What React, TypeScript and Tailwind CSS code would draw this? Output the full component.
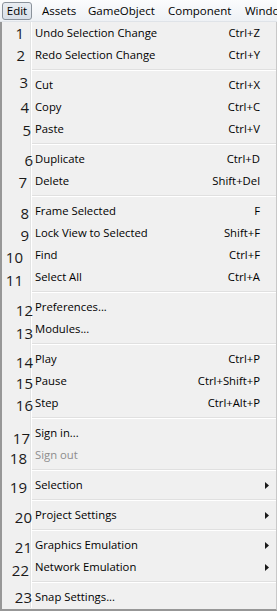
import React from "react";

type Item =
  | { kind: "sep" }
  | {
      kind: "item";
      n: string;
      label: string;
      shortcut?: string;
      sub?: boolean;
      disabled?: boolean;
      numCls: string;
    };

const items: Item[] = [
  { kind: "item", n: "1", label: "Undo Selection Change", shortcut: "Ctrl+Z", numCls: "w-[22px] top-[4px]" },
  { kind: "item", n: "2", label: "Redo Selection Change", shortcut: "Ctrl+Y", numCls: "w-[23px] top-[4px]" },
  { kind: "sep" },
  { kind: "item", n: "3", label: "Cut", shortcut: "Ctrl+X", numCls: "w-[26px] top-[1px]" },
  { kind: "item", n: "4", label: "Copy", shortcut: "Ctrl+C", numCls: "w-[27px] top-[4px]" },
  { kind: "item", n: "5", label: "Paste", shortcut: "Ctrl+V", numCls: "w-[29px] top-[5px]" },
  { kind: "sep" },
  { kind: "item", n: "6", label: "Duplicate", shortcut: "Ctrl+D", numCls: "w-[31px] top-[5px]" },
  { kind: "item", n: "7", label: "Delete", shortcut: "Shift+Del", numCls: "w-[25px] top-[5px]" },
  { kind: "sep" },
  { kind: "item", n: "8", label: "Frame Selected", shortcut: "F", numCls: "w-[27px] top-[6px]" },
  { kind: "item", n: "9", label: "Lock View to Selected", shortcut: "Shift+F", numCls: "w-[27px] top-[6px]" },
  { kind: "item", n: "10", label: "Find", shortcut: "Ctrl+F", numCls: "w-[21px] top-[6px]" },
  { kind: "item", n: "11", label: "Select All", shortcut: "Ctrl+A", numCls: "w-[21px] top-[7px]" },
  { kind: "sep" },
  { kind: "item", n: "12", label: "Preferences...", numCls: "w-[31px] top-[7px]" },
  { kind: "item", n: "13", label: "Modules...", numCls: "w-[31px] top-[8px]" },
  { kind: "sep" },
  { kind: "item", n: "14", label: "Play", shortcut: "Ctrl+P", numCls: "w-[31px] top-[7px]" },
  { kind: "item", n: "15", label: "Pause", shortcut: "Ctrl+Shift+P", numCls: "w-[31px] top-[6px]" },
  { kind: "item", n: "16", label: "Step", shortcut: "Ctrl+Alt+P", numCls: "w-[31px] top-[6px]" },
  { kind: "sep" },
  { kind: "item", n: "17", label: "Sign in...", numCls: "w-[28px] top-[9px]" },
  { kind: "item", n: "18", label: "Sign out", disabled: true, numCls: "w-[25px] top-[7px]" },
  { kind: "sep" },
  { kind: "item", n: "19", label: "Selection", sub: true, numCls: "w-[25px] top-[6px]" },
  { kind: "sep" },
  { kind: "item", n: "20", label: "Project Settings", sub: true, numCls: "w-[30px] top-[6px]" },
  { kind: "sep" },
  { kind: "item", n: "21", label: "Graphics Emulation", sub: true, numCls: "w-[30px] top-[6px]" },
  { kind: "item", n: "22", label: "Network Emulation", sub: true, numCls: "w-[27px] top-[7px]" },
  { kind: "sep" },
  { kind: "item", n: "23", label: "Snap Settings...", numCls: "w-[30px] top-[4px]" },
];

function Arrow() {
  return (
    <svg width="4" height="7" viewBox="0 0 4 7" className="block">
      <path d="M0 0 L4 3.5 L0 7 Z" fill="#1a1a1a" />
    </svg>
  );
}

export default function App() {
  return (
    <div className="w-[277px] h-[612px] overflow-hidden bg-white font-['Open_Sans','Noto_Sans',sans-serif] text-[11.3px] text-black">
      {/* menu bar */}
      <div className="h-[22px] flex items-center border-b border-[#dfe3e8] bg-gradient-to-b from-[#fbfcfd] to-[#eef1f5] whitespace-nowrap overflow-hidden text-[11.5px]">
        <div className="ml-[2px] w-[30px] h-[18px] shrink-0 flex items-center justify-center rounded-[3px] border border-[#8a929b] bg-gradient-to-b from-[#e9edf2] to-[#d9e0e8]">
          Edit
        </div>
        <div className="w-[10px] shrink-0" />
        <div className="w-[46px] shrink-0">Assets</div>
        <div className="w-[80px] shrink-0">GameObject</div>
        <div className="w-[77px] shrink-0">Component</div>
        <div className="shrink-0">Window</div>
      </div>

      {/* dropdown */}
      <div className="w-[277px] bg-[#f0f0f0] border-l-2 border-r border-b-2 border-l-[#979797] border-r-[#c8c8c8] border-b-[#979797] pb-[1px]">
        {items.map((it, i) =>
          it.kind === "sep" ? (
            <div key={i} className="flex h-[8px]">
              <div className="w-[29px] shrink-0 border-r border-[#e2e3e3]" />
              <div className="flex-1 border-l border-white flex flex-col justify-center">
                <div className="h-[1px] bg-[#e0e0e0]" />
                <div className="h-[1px] bg-white" />
              </div>
            </div>
          ) : (
            <div key={i} className="relative flex h-[22px]">
              <div className="w-[29px] shrink-0 border-r border-[#e2e3e3]" />
              <div className="flex-1 border-l border-white flex items-center pl-[3px]">
                <span className={"flex-1 whitespace-nowrap " + (it.disabled ? "text-[#8d8d8d]" : "")}>{it.label}</span>
                {it.shortcut && <span className="whitespace-nowrap">{it.shortcut}</span>}
                <div className="w-[16px] shrink-0 flex items-center pl-[5px]">{it.sub && <Arrow />}</div>
              </div>
              <span
                className={
                  "absolute left-0 text-right text-[15px] leading-none text-[#1a1a1a] font-['Open_Sans','Noto_Sans',sans-serif] " +
                  it.numCls
                }
              >
                {it.n}
              </span>
            </div>
          )
        )}
      </div>
    </div>
  );
}
